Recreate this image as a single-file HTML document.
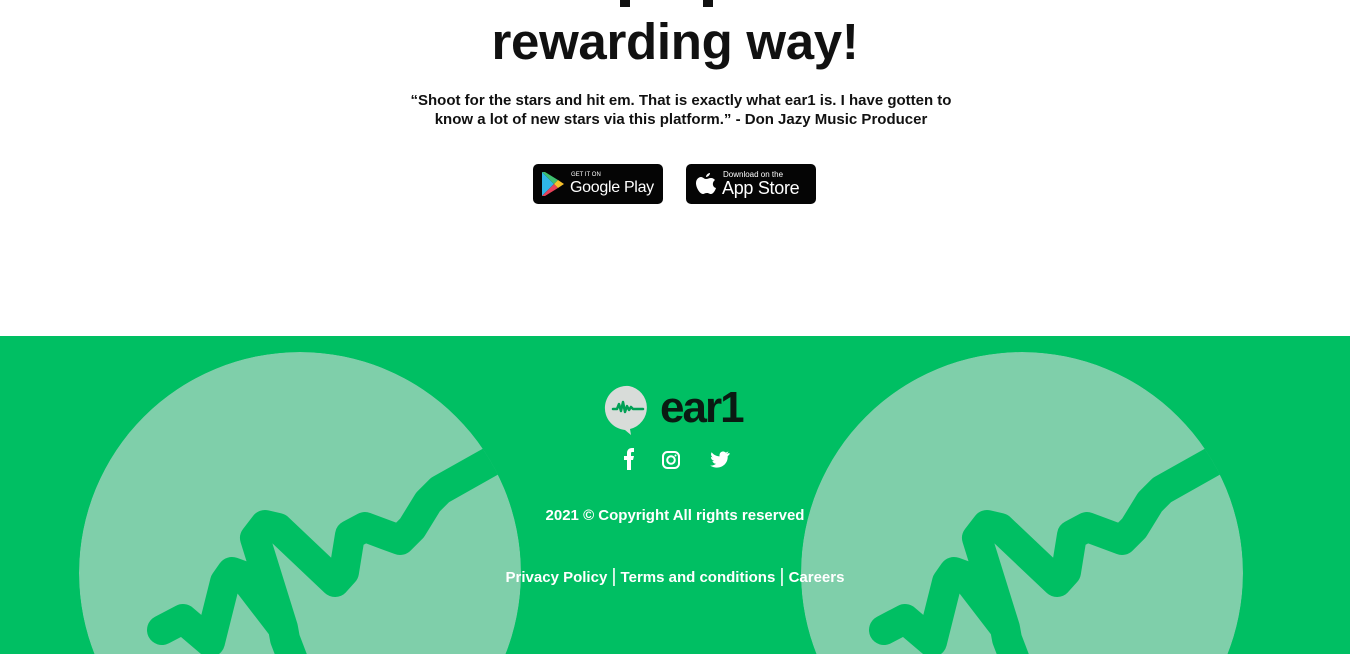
<!DOCTYPE html>
<html><head><meta charset="utf-8"><style>
*{margin:0;padding:0;box-sizing:border-box}
html,body{width:1352px;height:654px;overflow:hidden}
body{background:#fff;font-family:"Liberation Sans",Arial,sans-serif;position:relative}
.h1{position:absolute;left:0;width:1350px;top:12px;text-align:center;font-size:51px;font-weight:bold;color:#111;line-height:60px;letter-spacing:-0.3px}
.q{position:absolute;left:0;width:1350px;top:91px;text-align:center;font-size:15px;font-weight:bold;color:#111;line-height:19px;padding-left:12px}
.badge{position:absolute;top:164px;width:130px;height:40px;background:#050505;border-radius:5px;color:#fff}
.foot{position:absolute;left:0;top:336px;width:1350px;height:318px;background:#00bf63;overflow:hidden}
.w{color:#fff;font-weight:bold;font-size:15px;position:absolute;width:100%;text-align:center}
</style></head><body>
<div style="position:absolute;left:620px;top:0;width:10px;height:7px;background:#111"></div>
<div style="position:absolute;left:703px;top:0;width:10px;height:7px;background:#111"></div>
<div class="h1">rewarding way!</div>
<div class="q">“Shoot for the stars and hit em. That is exactly what ear1 is. I have gotten to<br>know a lot of new stars via this platform.” - Don Jazy Music Producer</div>
<div class="badge" style="left:533px">
<svg width="30" height="40" style="position:absolute;left:6px;top:0"><path d="M3 8 L3 32 L15 20Z" fill="#2fb6e8"/><path d="M3 8 L15 20 L19 16 L6 8Z" fill="#3fbf70"/><path d="M3 32 L15 20 L19 24 L6 32Z" fill="#e8415a"/><path d="M19 16 L25 20 L19 24 L15 20Z" fill="#f7c02b"/></svg>
<div style="position:absolute;left:38px;top:8px;font-size:6px">GET IT ON</div>
<div style="position:absolute;left:37px;top:15px;font-size:16px;letter-spacing:-0.3px">Google Play</div></div>
<div class="badge" style="left:686px">
<svg width="24" height="30" viewBox="0 0 24 30" style="position:absolute;left:8px;top:5px"><path d="M16 4c0 2-2 4-4 4 0-2 2-4 4-4zM12 10c2 0 3-1 5-1 2 0 3 1 4 2-3 2-3 7 1 8-1 3-3 6-5 6-2 0-2-1-4-1s-3 1-4 1c-3 0-7-6-7-11 0-4 3-6 5-6 2 0 3 2 5 2z" fill="#fff"/></svg>
<div style="position:absolute;left:37px;top:6px;font-size:8px">Download on the</div>
<div style="position:absolute;left:36px;top:14px;font-size:18px;letter-spacing:-0.3px">App Store</div></div>
<div class="foot">
<svg width="1350" height="318" style="position:absolute;left:0;top:0">
<defs><clipPath id="c1"><circle cx="300" cy="237" r="221"/></clipPath></defs>
<g clip-path="url(#c1)"><circle cx="300" cy="237" r="221" fill="#7fcfaa"/>
<path d="M162 294 L183 283 L210 306 L225 246 L232 236 L243 240 L283 292 L285 303 L293 324 M283 292 L255 202 L265 189 L278 192 L335 246 L344 236 L350 199 L365 191 L400 204 L412 192 L428 166 L440 154 L520 109" fill="none" stroke="#00bf63" stroke-width="30" stroke-linejoin="round" stroke-linecap="round"/></g>
<g transform="translate(722,0)"><g clip-path="url(#c1)"><circle cx="300" cy="237" r="221" fill="#7fcfaa"/>
<path d="M162 294 L183 283 L210 306 L225 246 L232 236 L243 240 L283 292 L285 303 L293 324 M283 292 L255 202 L265 189 L278 192 L335 246 L344 236 L350 199 L365 191 L400 204 L412 192 L428 166 L440 154 L520 109" fill="none" stroke="#00bf63" stroke-width="30" stroke-linejoin="round" stroke-linecap="round"/></g></g>
<path d="M629 50 a22 22 0 1 0 -4 44 l6 5 l-1 -6 a22 22 0 0 0 -1 -43z" fill="#d8dcd9"/>
<path d="M613 73 h4 l2 -5 l2 7 l2 -9 l2 10 l2 -6 l2 4 l2 -3 l2 2 h10" fill="none" stroke="#00a055" stroke-width="2.5" stroke-linejoin="round" stroke-linecap="round"/>
<text x="660" y="86" font-family="Liberation Sans,sans-serif" font-weight="bold" font-size="44" fill="#0a1a12" letter-spacing="-2">ear1</text>
<path d="M627 134 v-10 h-3 v-4 h3 v-3 c0-3 2-5 5-5 h2 v4 h-2 c-1 0-1 1-1 2 v2 h3 l-1 4 h-2 v10z" fill="#fff"/>
<rect x="663" y="116" width="16" height="16" rx="4.5" fill="none" stroke="#fff" stroke-width="2"/><circle cx="671" cy="124" r="3.8" fill="none" stroke="#fff" stroke-width="2"/><circle cx="675.5" cy="119.5" r="1" fill="#fff"/>
<path d="M729 117 c-1 0.5-2 0.7-2.5 0.8 1-0.6 1.5-1.5 2-2.4-1 0.5-2 1-3 1.1-2-2-6-1-6 3 0 0.3 0 0.6 0.1 0.9-3.5-0.2-6-1.8-8-4.2-1 2-0.5 4 1.2 5.2-0.7 0-1.3-0.2-1.900-0.5 0 2 1.4 3.5 3.3 4-0.6 0.2-1.2 0.2-1.8 0.1 0.5 1.6 2 2.8 3.8 2.8-1.8 1.4-4 2-6 1.8 8 5 18 0 17.5-9.5 0.9-0.6 1.6-1.4 2.2-2.3z" fill="#fff"/>
</svg>
<div class="w" style="top:171px;left:0">2021 © Copyright All rights reserved</div>
<div class="w" style="top:230px;left:0;font-size:15px">Privacy Policy <span style="font-weight:normal;font-size:19px">|</span> Terms and conditions <span style="font-weight:normal;font-size:19px">|</span> Careers</div>
</div>
</body></html>
